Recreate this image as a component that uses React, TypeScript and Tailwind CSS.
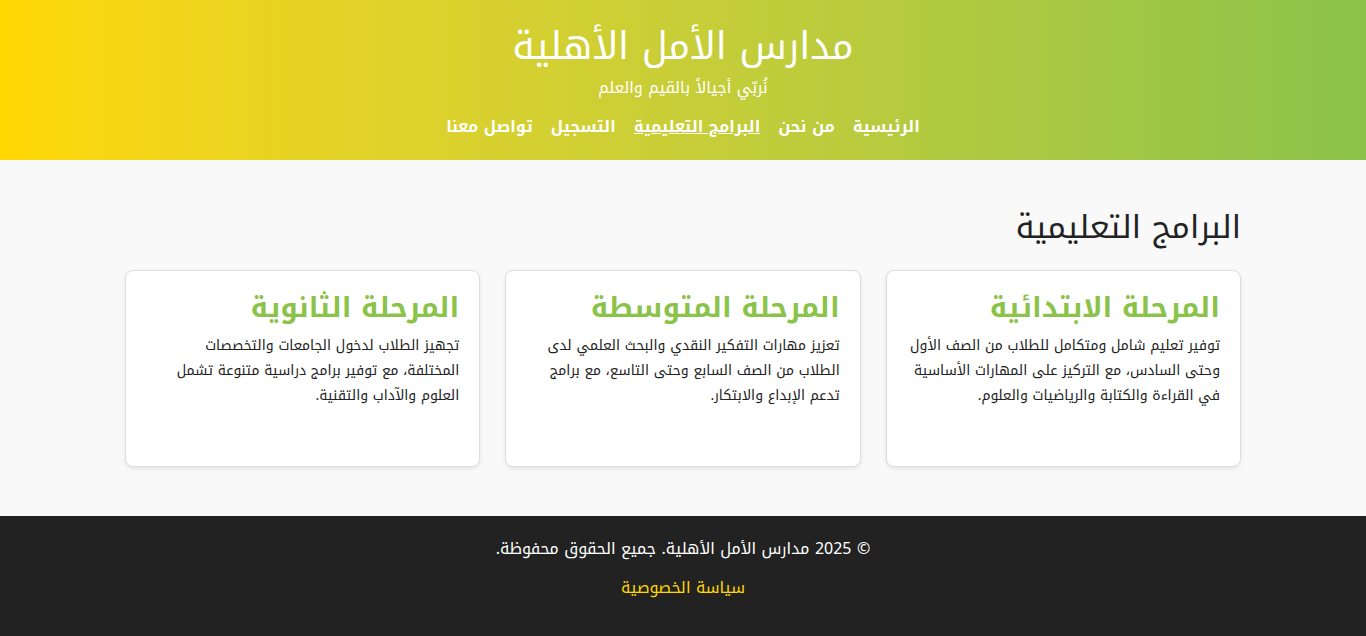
import React from "react";

const font = { fontFamily: '"Noto Kufi Arabic", "Noto Sans Arabic", "DejaVu Sans", sans-serif' };

const cards = [
  {
    title: "المرحلة الابتدائية",
    text: "توفير تعليم شامل ومتكامل للطلاب من الصف الأول وحتى السادس، مع التركيز على المهارات الأساسية في القراءة والكتابة والرياضيات والعلوم.",
  },
  {
    title: "المرحلة المتوسطة",
    text: "تعزيز مهارات التفكير النقدي والبحث العلمي لدى الطلاب من الصف السابع وحتى التاسع، مع برامج تدعم الإبداع والابتكار.",
  },
  {
    title: "المرحلة الثانوية",
    text: "تجهيز الطلاب لدخول الجامعات والتخصصات المختلفة، مع توفير برامج دراسية متنوعة تشمل العلوم والآداب والتقنية.",
  },
];

export default function App() {
  return (
    <div dir="rtl" style={font} className="min-h-screen bg-[#f9f9f9] text-[#222]">
      <header className="h-[160px] bg-gradient-to-l from-[#8BC34A] to-[#FFD700] text-white text-center pt-[25px]">
        <h1 className="text-[38px] leading-[42px] font-normal">مدارس الأمل الأهلية</h1>
        <p className="text-[16px] leading-[22px] mt-[10px]">نُربّي أجيالاً بالقيم والعلم</p>
        <nav className="flex justify-center gap-[18px] mt-[16px] text-[16px] font-bold">
          <a>الرئيسية</a>
          <a>من نحن</a>
          <a className="underline">البرامج التعليمية</a>
          <a>التسجيل</a>
          <a>تواصل معنا</a>
        </nav>
      </header>
      <main className="w-[1116px] mx-auto pt-[46px] pb-[49px]">
        <h2 className="text-[32px] leading-[44px] font-normal mb-[20px]">البرامج التعليمية</h2>
        <div className="grid grid-cols-3 gap-[25px]">
          {cards.map((c) => (
            <div key={c.title} className="bg-white border border-[#ddd] rounded-[8px] shadow-[0_2px_4px_rgba(0,0,0,0.08)] h-[197px] px-[20px] pt-[17px]">
              <h3 className="text-[28px] leading-[40px] font-bold text-[#8BC34A]">{c.title}</h3>
              <p className="text-[14px] leading-[25px] mt-[5px]">{c.text}</p>
            </div>
          ))}
        </div>
      </main>
      <footer className="h-[120px] bg-[#222] text-white text-center pt-[21px]">
        <p className="text-[16px] leading-[24px]">© 2025 مدارس الأمل الأهلية. جميع الحقوق محفوظة.</p>
        <a className="block text-[#FFD700] text-[16px] leading-[24px] mt-[15px]">سياسة الخصوصية</a>
      </footer>
    </div>
  );
}
